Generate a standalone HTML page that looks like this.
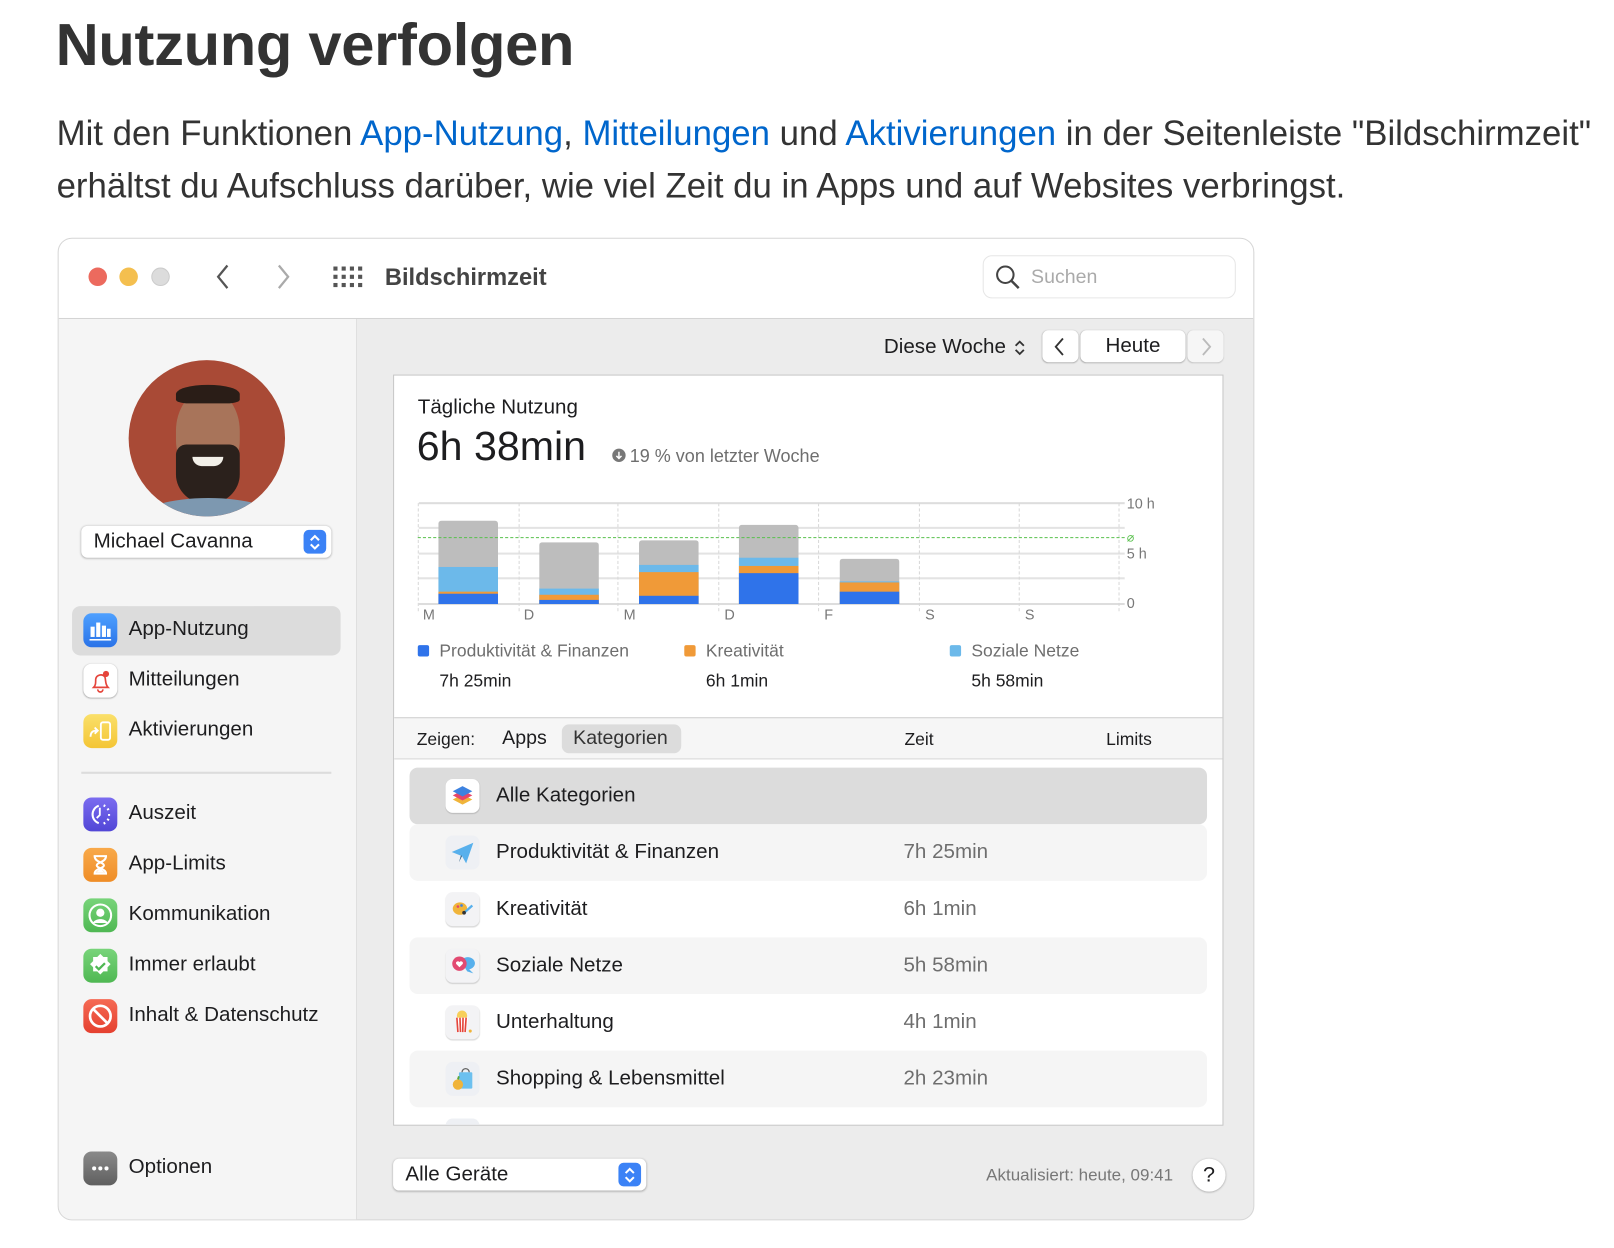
<!DOCTYPE html>
<html><head><meta charset="utf-8"><style>
*{box-sizing:border-box;margin:0;padding:0}
html,body{width:1614px;height:1248px;overflow:hidden;background:#fff}
body{font-family:"Liberation Sans",sans-serif;color:#1d1d1f}
#w{position:absolute;left:0;top:0;width:1570px;height:1213px;transform:scale(1.029);transform-origin:0 0}
.a{position:absolute;white-space:nowrap}
h1{position:absolute;left:54px;top:10px;font-size:58px;font-weight:bold;color:#333;letter-spacing:-0.3px}
.p{position:absolute;left:55px;top:105px;font-size:33.8px;line-height:51px;color:#333;width:1560px}
.p span{color:#0066cc}
.win{position:absolute;left:56px;top:231px;width:1163px;height:955px;border:1.5px solid #d6d6d6;border-radius:14px;overflow:hidden;background:#ececec}
.tb{position:absolute;left:0;top:0;width:100%;height:78px;background:#fff;border-bottom:1.5px solid #d4d4d4}
.sb{position:absolute;left:0;top:78px;width:290px;height:880px;background:#f5f5f5;border-right:1px solid #dedede}
.dot{position:absolute;width:18px;height:18px;border-radius:50%;top:28px}
.ico{position:absolute;width:33px;height:33px;border-radius:8px;left:24px}
.it{position:absolute;left:68px;font-size:20px;color:#1d1d1f}
.card{position:absolute;left:382px;top:364px;width:807px;height:730px;background:#fff;border:1.5px solid #c6c6c6;overflow:hidden}
.gl{position:absolute;left:24px;width:686px;height:1.5px;background:#e3e3e3}
.vl{position:absolute;top:124px;height:105px;border-left:1px dashed #d8d8d8}
.bar{position:absolute;width:58px;border-radius:3px 3px 0 0;overflow:hidden}
.bar div{position:absolute;left:0;width:100%}
.dl{position:absolute;top:224px;font-size:14px;color:#777}
.row{position:absolute;left:15px;width:775px;height:55px;border-radius:8px}
.ri{position:absolute;left:35px;top:11px;width:33px;height:33px;border-radius:7px;background:#f3f3f5;box-shadow:0 1px 1px rgba(0,0,0,.15)}
.rt{position:absolute;left:84px;top:16px;font-size:20px;color:#1d1d1f}
.rz{position:absolute;left:480px;top:16px;font-size:20px;color:#6e6e6e}
</style></head><body><div id="w">
<h1>Nutzung verfolgen</h1>
<div class="p">Mit den Funktionen <span>App-Nutzung</span>, <span>Mitteilungen</span> und <span>Aktivierungen</span> in der Seitenleiste "Bildschirmzeit"<br>erhältst du Aufschluss darüber, wie viel Zeit du in Apps und auf Websites verbringst.</div>
<div class="win">
 <div class="tb">
  <div class="dot" style="left:29px;background:#ec6a5e"></div>
  <div class="dot" style="left:59px;background:#f4bf4f"></div>
  <div class="dot" style="left:90px;background:#dcdcdc;border:1px solid #ccc"></div>
  <svg class="a" style="left:152px;top:24px" width="16" height="26" viewBox="0 0 16 26"><path d="M12 2 3 13l9 11" fill="none" stroke="#555" stroke-width="2.2"/></svg>
  <svg class="a" style="left:210px;top:24px" width="16" height="26" viewBox="0 0 16 26"><path d="M4 2l9 11-9 11" fill="none" stroke="#aaa" stroke-width="2.2"/></svg>
  <svg class="a" style="left:266px;top:26px" width="30" height="22" viewBox="0 0 30 22"><g fill="#555"><rect x="1" y="1" width="4" height="4"/><rect x="9" y="1" width="4" height="4"/><rect x="17" y="1" width="4" height="4"/><rect x="25" y="1" width="4" height="4"/><rect x="1" y="9" width="4" height="4"/><rect x="9" y="9" width="4" height="4"/><rect x="17" y="9" width="4" height="4"/><rect x="25" y="9" width="4" height="4"/><rect x="1" y="17" width="4" height="4"/><rect x="9" y="17" width="4" height="4"/><rect x="17" y="17" width="4" height="4"/><rect x="25" y="17" width="4" height="4"/></g></svg>
  <div class="a" style="left:317px;top:24px;font-size:23px;font-weight:bold;color:#444">Bildschirmzeit</div>
  <div class="a" style="left:898px;top:16px;width:246px;height:42px;border:1px solid #e6e6e6;border-radius:9px"></div>
  <svg class="a" style="left:910px;top:25px" width="26" height="26" viewBox="0 0 26 26"><circle cx="10" cy="10" r="8" fill="none" stroke="#444" stroke-width="2"/><path d="M16 16l7 7" stroke="#444" stroke-width="2.4"/></svg>
  <div class="a" style="left:945px;top:27px;font-size:19px;color:#aaa">Suchen</div>
 </div>
 <div class="sb">
  <div class="a" style="left:68px;top:40px;width:152px;height:152px;border-radius:50%;background:radial-gradient(ellipse at 50% 55%,#a94a36 0,#a94a36 70%,#963f30 100%);overflow:hidden">
   <div class="a" style="left:46px;top:30px;width:62px;height:86px;border-radius:45%;background:#a8745a"></div>
   <div class="a" style="left:46px;top:82px;width:62px;height:58px;border-radius:10px 10px 50% 50%;background:#2b211c"></div>
   <div class="a" style="left:62px;top:94px;width:30px;height:9px;border-radius:0 0 12px 12px;background:#f2efe8"></div>
   <div class="a" style="left:46px;top:24px;width:62px;height:18px;border-radius:50% 50% 20% 20%;background:#2a1d17"></div>
   <div class="a" style="left:10px;top:134px;width:135px;height:40px;border-radius:50% 50% 0 0;background:#7d98b0"></div>
  </div>
  <div class="a" style="left:22px;top:201px;width:243px;height:31px;background:#fff;border-radius:6px;box-shadow:0 0.5px 2px rgba(0,0,0,.3)"></div>
  <div class="a" style="left:34px;top:205px;font-size:20px;color:#1d1d1f">Michael Cavanna</div>
  <div class="a" style="left:238px;top:205px;width:22px;height:23px;border-radius:5px;background:#3b82f6"></div>
  <svg class="a" style="left:242px;top:207px" width="14" height="20" viewBox="0 0 14 20"><path d="M3 8l4-4 4 4M3 12l4 4 4-4" fill="none" stroke="#fff" stroke-width="2"/></svg>
  <div class="a" style="left:13px;top:279px;width:261px;height:48px;background:#dcdcdc;border-radius:8px"></div>
  <div class="ico" style="top:286px;background:linear-gradient(#4ea0ff,#2a73e8)"><svg width="33" height="33"><g fill="#fff"><rect x="7" y="13" width="4" height="10"/><rect x="12.5" y="9" width="4" height="14"/><rect x="18" y="12" width="4" height="11"/><rect x="23" y="15" width="3.5" height="8"/><rect x="6" y="25" width="21" height="1.5"/></g></svg></div>
  <div class="it" style="top:290px">App-Nutzung</div>
  <div class="ico" style="top:335px;background:#fff;box-shadow:0 0.5px 1.5px rgba(0,0,0,.3)"><svg width="33" height="33"><path d="M10 23c2-2 2-4 2-8a5 5 0 0 1 9 -2c1 3 0 7 3 10zM14 25a2.5 2.5 0 0 0 5 0" fill="none" stroke="#e5453b" stroke-width="1.6"/><circle cx="22" cy="10" r="3" fill="#e5453b"/></svg></div>
  <div class="it" style="top:339px">Mitteilungen</div>
  <div class="ico" style="top:384px;background:linear-gradient(#fae06a,#f4c535)"><svg width="33" height="33"><rect x="17" y="8" width="9" height="17" rx="2" fill="none" stroke="#fff" stroke-width="1.8"/><path d="M7 22c0-4 2-6 6-6M11 13l3 3-3 3" fill="none" stroke="#fff" stroke-width="1.8"/></svg></div>
  <div class="it" style="top:388px">Aktivierungen</div>
  <div class="a" style="left:22px;top:440px;width:243px;height:1.5px;background:#dcdcdc"></div>
  <div class="ico" style="top:465px;background:linear-gradient(#7b6cf0,#5146d6)"><svg width="33" height="33"><path d="M15 8a9 9 0 0 0 0 17" fill="none" stroke="#fff" stroke-width="2"/><path d="M16 10v7l-3 3" fill="none" stroke="#fff" stroke-width="1.8"/><g stroke="#fff" stroke-width="1.8"><path d="M20 9l1-2M23 12l2-1M24 17h2M23 21l2 1M20 24l1 2"/></g></svg></div>
  <div class="it" style="top:469px">Auszeit</div>
  <div class="ico" style="top:514px;background:linear-gradient(#f8a94a,#ef8d27)"><svg width="33" height="33"><path d="M10 8h13M10 25h13M11 8c0 6 9 6 9 9s-9 3-9 8M22 8c0 6-9 6-9 9s9 3 9 8" fill="none" stroke="#fff" stroke-width="2"/><path d="M12 24l4.5-4 4.5 4z" fill="#fff"/></svg></div>
  <div class="it" style="top:518px">App-Limits</div>
  <div class="ico" style="top:563px;background:linear-gradient(#78d47a,#4fb853)"><svg width="33" height="33"><circle cx="16.5" cy="16.5" r="10.5" fill="none" stroke="#fff" stroke-width="2"/><circle cx="16.5" cy="14" r="4" fill="#fff"/><path d="M9 24c3-5 12-5 15 0" fill="#fff"/></svg></div>
  <div class="it" style="top:567px">Kommunikation</div>
  <div class="ico" style="top:612px;background:linear-gradient(#78d47a,#4fb853)"><svg width="33" height="33"><path d="M16.5 5l3 3h4v4l3 3-3 3v4h-4l-3 3-3-3h-4v-4l-3-3 3-3V8h4z" fill="#fff"/><path d="M12 17l3 3 6-6" fill="none" stroke="#4fb853" stroke-width="2.2"/></svg></div>
  <div class="it" style="top:616px">Immer erlaubt</div>
  <div class="ico" style="top:661px;background:linear-gradient(#f56a54,#e5402f)"><svg width="33" height="33"><circle cx="16.5" cy="16.5" r="10" fill="none" stroke="#fff" stroke-width="2.6"/><path d="M9.5 9.5l14 14" stroke="#fff" stroke-width="2.6"/></svg></div>
  <div class="it" style="top:665px">Inhalt &amp; Datenschutz</div>
  <div class="ico" style="top:809px;background:linear-gradient(#8a8a8a,#5f5f5f)"><svg width="33" height="33"><g fill="#fff"><circle cx="10.5" cy="16.5" r="2"/><circle cx="16.5" cy="16.5" r="2"/><circle cx="22.5" cy="16.5" r="2"/></g></svg></div>
  <div class="it" style="top:813px">Optionen</div>
 </div>
 <div class="a" style="left:802px;top:94px;font-size:20px">Diese Woche</div>
 <svg class="a" style="left:927px;top:96px" width="14" height="20" viewBox="0 0 14 20"><path d="M3 8l4-4 4 4M3 12l4 4 4-4" fill="none" stroke="#333" stroke-width="1.8"/></svg>
 <div class="a" style="left:956px;top:89px;width:35px;height:31px;background:#fff;border-radius:6px;box-shadow:0 .5px 1.5px rgba(0,0,0,.3)"></div>
 <svg class="a" style="left:966px;top:95px" width="14" height="20" viewBox="0 0 14 20"><path d="M10 2 3 10l7 8" fill="none" stroke="#333" stroke-width="1.8"/></svg>
 <div class="a" style="left:993px;top:89px;width:102px;height:31px;background:#fff;border-radius:6px;box-shadow:0 .5px 1.5px rgba(0,0,0,.3);text-align:center;font-size:20px;line-height:31px">Heute</div>
 <div class="a" style="left:1097px;top:89px;width:35px;height:31px;background:#f6f6f6;border-radius:6px;box-shadow:0 .5px 1.5px rgba(0,0,0,.2)"></div>
 <svg class="a" style="left:1108px;top:95px" width="14" height="20" viewBox="0 0 14 20"><path d="M4 2l7 8-7 8" fill="none" stroke="#bbb" stroke-width="1.8"/></svg>
 <div class="a" style="left:325px;top:894px;width:246px;height:31px;background:#fff;border-radius:6px;box-shadow:0 .5px 2px rgba(0,0,0,.3)"></div>
 <div class="a" style="left:337px;top:898px;font-size:20px">Alle Geräte</div>
 <div class="a" style="left:544px;top:898px;width:22px;height:23px;border-radius:5px;background:#3b82f6"></div>
 <svg class="a" style="left:548px;top:900px" width="14" height="20" viewBox="0 0 14 20"><path d="M3 8l4-4 4 4M3 12l4 4 4-4" fill="none" stroke="#fff" stroke-width="2"/></svg>
 <div class="a" style="right:78px;top:901px;font-size:16.5px;color:#777">Aktualisiert: heute, 09:41</div>
 <div class="a" style="left:1102px;top:894px;width:32px;height:32px;border-radius:50%;background:#fff;box-shadow:0 .5px 2px rgba(0,0,0,.35);text-align:center;font-size:21px;line-height:32px">?</div>
</div>
<div class="card">
 <div class="a" style="left:23px;top:20px;font-size:20px">Tägliche Nutzung</div>
 <div class="a" style="left:22px;top:47px;font-size:40px">6h 38min</div>
 <div class="a" style="left:212px;top:71px;width:13px;height:13px;border-radius:50%;background:#777"></div>
 <svg class="a" style="left:212px;top:71px" width="13" height="13"><path d="M6.5 3v6M4 7l2.5 2.5L9 7" fill="none" stroke="#fff" stroke-width="1.4"/></svg>
 <div class="a" style="left:229px;top:68px;font-size:17.5px;color:#6e6e6e">19 % von letzter Woche</div>
 <div class="gl" style="top:123px;background:#ddd"></div>
 <div class="gl" style="top:147px"></div>
 <div class="gl" style="top:172px"></div>
 <div class="gl" style="top:196px"></div>
 <div class="gl" style="top:221px;background:#ddd"></div>
 <div class="vl" style="left:23px"></div><div class="vl" style="left:121px"></div><div class="vl" style="left:217px"></div><div class="vl" style="left:315px"></div><div class="vl" style="left:412px"></div><div class="vl" style="left:510px"></div><div class="vl" style="left:607px"></div><div class="vl" style="left:704px"></div>
 <div class="bar" style="left:43px;top:141px;height:81px"><div style="top:0;height:81px;background:#bdbdbd"></div><div style="top:45px;height:36px;background:#6cb9ea"></div><div style="top:69px;height:12px;background:#f09a38"></div><div style="top:71px;height:10px;background:#2f73ea"></div></div>
 <div class="bar" style="left:141px;top:162px;height:60px"><div style="top:0;height:60px;background:#bdbdbd"></div><div style="top:45px;height:15px;background:#6cb9ea"></div><div style="top:51px;height:9px;background:#f09a38"></div><div style="top:56px;height:4px;background:#2f73ea"></div></div>
 <div class="bar" style="left:238px;top:160px;height:62px"><div style="top:0;height:62px;background:#bdbdbd"></div><div style="top:24px;height:38px;background:#6cb9ea"></div><div style="top:31px;height:31px;background:#f09a38"></div><div style="top:54px;height:8px;background:#2f73ea"></div></div>
 <div class="bar" style="left:335px;top:145px;height:77px"><div style="top:0;height:77px;background:#bdbdbd"></div><div style="top:32px;height:45px;background:#6cb9ea"></div><div style="top:40px;height:37px;background:#f09a38"></div><div style="top:47px;height:30px;background:#2f73ea"></div></div>
 <div class="bar" style="left:433px;top:178px;height:44px"><div style="top:0;height:44px;background:#bdbdbd"></div><div style="top:22px;height:22px;background:#6cb9ea"></div><div style="top:23px;height:21px;background:#f09a38"></div><div style="top:32px;height:12px;background:#2f73ea"></div></div>
 <div class="a" style="left:23px;top:157px;width:687px;border-top:1.5px dashed #58c04c"></div>
 <div class="a" style="left:712px;top:116px;font-size:14px;color:#777">10 h</div>
 <div class="a" style="left:712px;top:150px;font-size:12px;color:#58c04c">⌀</div>
 <div class="a" style="left:712px;top:165px;font-size:14px;color:#777">5 h</div>
 <div class="a" style="left:712px;top:213px;font-size:14px;color:#777">0</div>
 <div class="dl" style="left:28px">M</div><div class="dl" style="left:126px">D</div><div class="dl" style="left:223px">M</div><div class="dl" style="left:321px">D</div><div class="dl" style="left:418px">F</div><div class="dl" style="left:516px">S</div><div class="dl" style="left:613px">S</div>
 <div class="a" style="left:23px;top:262px;width:11px;height:11px;border-radius:2px;background:#2f73ea"></div>
 <div class="a" style="left:44px;top:258px;font-size:17px;color:#6e6e6e">Produktivität &amp; Finanzen</div>
 <div class="a" style="left:44px;top:287px;font-size:17px">7h 25min</div>
 <div class="a" style="left:282px;top:262px;width:11px;height:11px;border-radius:2px;background:#f09a38"></div>
 <div class="a" style="left:303px;top:258px;font-size:17px;color:#6e6e6e">Kreativität</div>
 <div class="a" style="left:303px;top:287px;font-size:17px">6h 1min</div>
 <div class="a" style="left:540px;top:262px;width:11px;height:11px;border-radius:2px;background:#6cb9ea"></div>
 <div class="a" style="left:561px;top:258px;font-size:17px;color:#6e6e6e">Soziale Netze</div>
 <div class="a" style="left:561px;top:287px;font-size:17px">5h 58min</div>
 <div class="a" style="left:0;top:332px;width:100%;height:41px;background:#f6f6f6;border-top:1.5px solid #cfcfcf;border-bottom:1.5px solid #d8d8d8"></div>
 <div class="a" style="left:22px;top:344px;font-size:17px">Zeigen:</div>
 <div class="a" style="left:105px;top:342px;font-size:19px">Apps</div>
 <div class="a" style="left:163px;top:339px;width:116px;height:28px;border-radius:7px;background:#dcdcdc"></div>
 <div class="a" style="left:174px;top:342px;font-size:19px;color:#333">Kategorien</div>
 <div class="a" style="left:496px;top:344px;font-size:17px">Zeit</div>
 <div class="a" style="left:692px;top:344px;font-size:17px">Limits</div>
 <div class="row" style="top:381px;background:#dcdcdc"><div class="ri" style="background:#fff"><svg width="33" height="33"><path d="M7 20l9.5 5 9.5-5-9.5-5z" fill="#f0b43a"/><path d="M7 16l9.5 5 9.5-5-9.5-5z" fill="#e6466a"/><path d="M7 12l9.5 5 9.5-5-9.5-5z" fill="#3d82e0"/></svg></div><div class="rt">Alle Kategorien</div></div>
 <div class="row" style="top:436px;background:#f5f5f5"><div class="ri" style="box-shadow:none;background:#eef0f4"><svg width="33" height="33"><path d="M6 16l21-9-7 20-4-7z" fill="#58b0ec"/><path d="M16 20l-3 6 2-7z" fill="#2d5f85"/></svg></div><div class="rt">Produktivität &amp; Finanzen</div><div class="rz">7h 25min</div></div>
 <div class="row" style="top:491px"><div class="ri"><svg width="33" height="33"><ellipse cx="14" cy="16" rx="7" ry="6" fill="#f0b43a"/><circle cx="12" cy="14" r="1.3" fill="#e6466a"/><circle cx="15.5" cy="13" r="1.3" fill="#3d82e0"/><path d="M17 21l9-8" stroke="#58b0ec" stroke-width="2.2"/><circle cx="18" cy="20" r="1.8" fill="#333"/></svg></div><div class="rt">Kreativität</div><div class="rz">6h 1min</div></div>
 <div class="row" style="top:546px;background:#f5f5f5"><div class="ri"><svg width="33" height="33"><path d="M15 12a7 6 0 1 1 8 8l4 4-6-2z" fill="#58b0ec"/><circle cx="13.5" cy="14.5" r="7" fill="#e24a72"/><path d="M13.5 18l-3-3a1.7 1.7 0 0 1 3-2 1.7 1.7 0 0 1 3 2z" fill="#fff"/></svg></div><div class="rt">Soziale Netze</div><div class="rz">5h 58min</div></div>
 <div class="row" style="top:601px"><div class="ri"><svg width="33" height="33"><circle cx="16" cy="10" r="5" fill="#f7cf5a"/><path d="M10 12h12l-2 14h-8z" fill="#fff"/><g stroke="#e5453b" stroke-width="1.6"><path d="M11 12l1 14M14 12l.5 14M17 12l-.3 14M20 12l-1 14"/></g><circle cx="24" cy="25" r="1.5" fill="#f0b43a"/></svg></div><div class="rt">Unterhaltung</div><div class="rz">4h 1min</div></div>
 <div class="row" style="top:656px;background:#f5f5f5"><div class="ri" style="box-shadow:none;background:#eef0f4"><svg width="33" height="33"><rect x="13" y="10" width="13" height="16" rx="1" fill="#6cc0ef"/><path d="M16 10a3.5 3.5 0 0 1 7 0" fill="none" stroke="#666" stroke-width="1.3"/><circle cx="12" cy="22" r="5" fill="#f0b43a"/><path d="M12 17l1-3" stroke="#58a83a" stroke-width="1.8"/></svg></div><div class="rt">Shopping &amp; Lebensmittel</div><div class="rz">2h 23min</div></div>
 <div class="a" style="left:50px;top:722px;width:33px;height:20px;border-radius:7px;background:#eef0f4"></div>
</div>
</div></body></html>
